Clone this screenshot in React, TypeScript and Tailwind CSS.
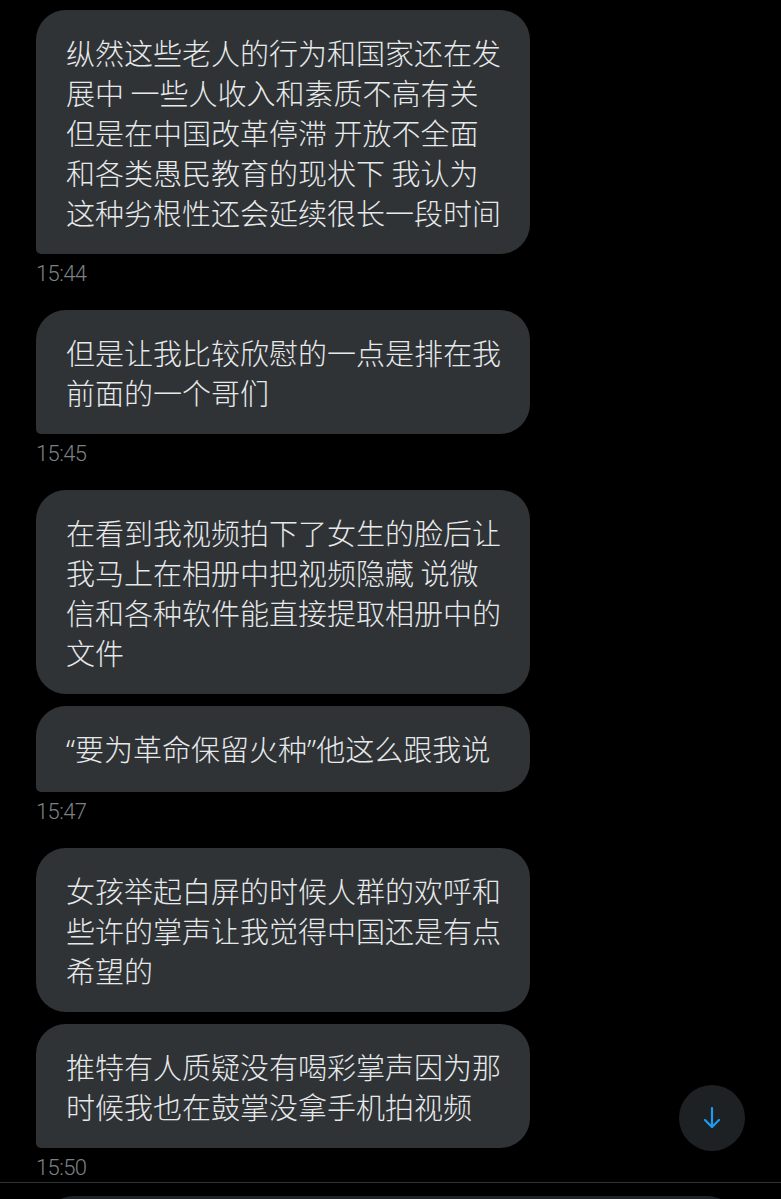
const cjk = { fontFamily: '"Noto Sans CJK SC", "Noto Sans", sans-serif' };

type Bubble = { lines: React.ReactNode[] };
type Group = { bubbles: Bubble[]; time: string };

const Q = ({ children }: { children: string }) => (
  <span style={{ fontFamily: '"Noto Sans", sans-serif' }}>{children}</span>
);

const groups: Group[] = [
  {
    bubbles: [
      {
        lines: [
          "纵然这些老人的行为和国家还在发",
          "展中 一些人收入和素质不高有关",
          "但是在中国改革停滞 开放不全面",
          "和各类愚民教育的现状下 我认为",
          "这种劣根性还会延续很长一段时间",
        ],
      },
    ],
    time: "15:44",
  },
  {
    bubbles: [{ lines: ["但是让我比较欣慰的一点是排在我", "前面的一个哥们"] }],
    time: "15:45",
  },
  {
    bubbles: [
      {
        lines: [
          "在看到我视频拍下了女生的脸后让",
          "我马上在相册中把视频隐藏 说微",
          "信和各种软件能直接提取相册中的",
          "文件",
        ],
      },
      {
        lines: [
          <>
            <Q>“</Q>要为革命保留火种<Q>”</Q>他这么跟我说
          </>,
        ],
      },
    ],
    time: "15:47",
  },
  {
    bubbles: [
      {
        lines: [
          "女孩举起白屏的时候人群的欢呼和",
          "些许的掌声让我觉得中国还是有点",
          "希望的",
        ],
      },
      {
        lines: ["推特有人质疑没有喝彩掌声因为那", "时候我也在鼓掌没拿手机拍视频"],
      },
    ],
    time: "15:50",
  },
];

function MessageBubble({ bubble, last }: { bubble: Bubble; last: boolean }) {
  return (
    <div
      className={
        "w-[494px] bg-[#2f3336] py-[22px] pl-[30px] pr-[26px] text-[29px] font-light leading-[40px] text-[#e7e9ea] rounded-[30px] " +
        (last ? "rounded-bl-[5px]" : "")
      }
      style={cjk}
    >
      {bubble.lines.map((l, i) => (
        <div key={i} className="whitespace-nowrap">
          {l}
        </div>
      ))}
    </div>
  );
}

export default function App() {
  return (
    <div className="relative h-[1199px] w-[781px] overflow-hidden bg-black">
      <div className="flex flex-col pl-[36px] pt-[10px]">
        {groups.map((g, gi) => (
          <div key={gi} className={gi > 0 ? "mt-[22px] flex flex-col" : "flex flex-col"}>
            <div className="flex flex-col gap-[12px]">
              {g.bubbles.map((b, bi) => (
                <MessageBubble key={bi} bubble={b} last={bi === g.bubbles.length - 1} />
              ))}
            </div>
            <div
              className="mt-[6px] text-[22px] font-light leading-[28px] tracking-[-0.6px] text-[#7c8084]"
              style={{ fontFamily: 'Roboto, "Liberation Sans", sans-serif' }}
            >
              {g.time}
            </div>
          </div>
        ))}
      </div>
      <div className="h-px w-full bg-[#2f3336]" />
      <div className="mx-[44px] mt-[13px] h-[60px] rounded-[32px] bg-[#202327]" />

      <button className="absolute left-[679px] top-[1085px] flex h-[66px] w-[66px] items-center justify-center rounded-full bg-[#1e2124]">
        <svg width="24" height="26" viewBox="0 0 24 26" fill="none" stroke="#1d9bf0" strokeWidth="2.2" strokeLinecap="round" strokeLinejoin="round">
          <path d="M12 3v19" />
          <path d="M5 15l7 7 7-7" />
        </svg>
      </button>
    </div>
  );
}
